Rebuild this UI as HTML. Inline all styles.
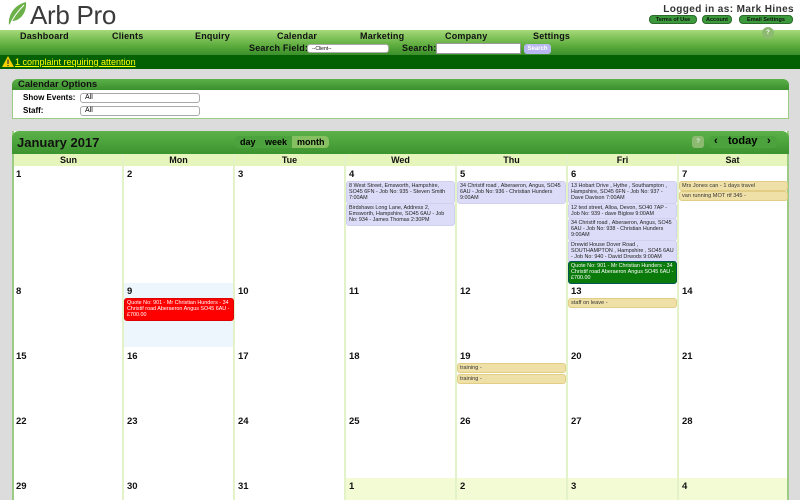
<!DOCTYPE html>
<html><head><style>
*{margin:0;padding:0;box-sizing:border-box}
body{width:800px;height:500px;overflow:hidden;background:#dcdcdc;font-family:"Liberation Sans",Arial,sans-serif;position:relative}
.a{position:absolute}
.top{left:0;top:0;width:800px;height:30px;background:#fff}
.logo{left:30px;top:0px;font-size:26px;color:#3a3a3a;letter-spacing:-0.3px}
.nav{left:0;top:30px;width:800px;height:25px;background:linear-gradient(#a6d97a,#5fae3f 60%,#3a8f2a)}
.nav span{position:absolute;top:1px;font-size:9px;font-weight:bold;color:#111;letter-spacing:0.2px}
.bar{left:0;top:55px;width:800px;height:14px;background:#036103}
.pill{top:15px;height:9px;background:#3c9a3c;border:1px solid #2c6a2c;border-radius:4px;font-size:5.5px;color:#111;font-weight:bold;text-align:center;line-height:8px}
.box{left:12px;top:79px;width:777px;height:40px;background:#fff;border:1px solid #9ccc84;border-top:none;border-radius:6px 6px 0 0}
.boxh{left:12px;top:79px;width:777px;height:11px;background:linear-gradient(#5cb04a,#3a8f2c);border-radius:6px 6px 0 0;font-size:9.5px;font-weight:bold;color:#111;padding-left:6px;line-height:11px}
.sel{height:10px;background:#fff;border:1px solid #aaa;border-radius:3px;font-size:7px;padding-left:4px;line-height:8px}
.cal{left:12px;top:131px;width:777px;height:369px;background:#fff;border-left:2px solid #9ccc84;border-right:2px solid #9ccc84}
.calh{left:12px;top:131px;width:777px;height:23px;background:linear-gradient(#5db24a,#3c942e);border-radius:7px 7px 0 0}
.dh{top:154px;height:12px;background:#e6f5bb;font-size:9px;font-weight:bold;text-align:center;line-height:12px;color:#111}
.vl{top:154px;width:2px;height:346px;background:#e4f2c8}
.n{font-size:9.5px;font-weight:bold;color:#111}
.ev{font-size:5.4px;line-height:6.2px;color:#222;background:#dcdcf8;border-radius:3px;padding:1px 2px;border:1px solid #d0d0ef}
.ye{font-size:5.6px;line-height:7px;color:#333;background:#efe0a8;border:1px solid #e2cd84;border-radius:3px;padding:1px 2px;height:10px}
</style></head><body>
<div class="a top"></div>
<svg class="a" style="left:6px;top:1px" width="22" height="26" viewBox="0 0 22 26"><path d="M3 24 C2 14 8 4 20 1 C21 12 14 20 6 20 Z" fill="#6cb04a"/><path d="M4 24 C7 16 12 10 18 4" stroke="#fff" stroke-width="1" fill="none"/></svg>
<div class="a logo">Arb Pro</div>
<div class="a" style="right:6px;top:4px;font-size:10px;font-weight:bold;color:#333;letter-spacing:.4px">Logged in as: Mark Hines</div>
<div class="a pill" style="left:649px;width:48px">Terms of Use</div>
<div class="a pill" style="left:702px;width:30px">Account</div>
<div class="a pill" style="left:739px;width:54px">Email Settings</div>
<div class="a nav">
<span style="left:20px">Dashboard</span><span style="left:112px">Clients</span><span style="left:195px">Enquiry</span><span style="left:277px">Calendar</span><span style="left:360px">Marketing</span><span style="left:445px">Company</span><span style="left:533px">Settings</span>
<span style="left:249px;top:13px">Search Field:</span><span style="left:402px;top:13px">Search:</span>
</div>
<div class="a" style="left:762px;top:27px;width:12px;height:12px;border-radius:6px;background:#8cba70;color:#fff;font-size:6px;text-align:center;line-height:12px;font-weight:bold">?</div>
<div class="a sel" style="left:307px;top:44px;width:82px;height:9px;font-size:5px">--Client--</div>
<div class="a" style="left:436px;top:43px;width:85px;height:11px;background:#fff;border:1px solid #999"></div>
<div class="a" style="left:524px;top:44px;width:27px;height:10px;background:#b8b8f0;border-radius:3px;font-size:6px;color:#fff;text-align:center;line-height:10px;font-weight:bold">Search</div>
<div class="a bar"></div>
<svg class="a" style="left:2px;top:56px" width="12" height="11"><path d="M6 0 L12 11 L0 11Z" fill="#f5d000"/><rect x="5.4" y="3.5" width="1.2" height="4.5" fill="#333"/><rect x="5.4" y="9" width="1.2" height="1.2" fill="#333"/></svg>
<div class="a" style="left:15px;top:57px;font-size:9px;color:#ff0;text-decoration:underline">1 complaint requiring attention</div>
<div class="a box"></div>
<div class="a boxh">Calendar Options</div>
<div class="a" style="left:23px;top:93px;font-size:8px;font-weight:bold">Show Events:</div>
<div class="a sel" style="left:80px;top:93px;width:120px">All</div>
<div class="a" style="left:23px;top:106px;font-size:8px;font-weight:bold">Staff:</div>
<div class="a sel" style="left:80px;top:106px;width:120px">All</div>
<div class="a cal"></div>
<div class="a calh"></div>
<div class="a" style="left:17px;top:135px;font-size:13px;font-weight:bold;color:#111">January 2017</div>
<div class="a" style="left:235px;top:136px;width:95px;height:12px;background:#4ca23c;border-radius:4px"></div>
<div class="a" style="left:292px;top:136px;width:37px;height:12px;background:#86c060;border-radius:0 4px 4px 0"></div>
<div class="a" style="left:240px;top:137px;font-size:9px;font-weight:bold">day</div>
<div class="a" style="left:265px;top:137px;font-size:9px;font-weight:bold">week</div>
<div class="a" style="left:297px;top:137px;font-size:9px;font-weight:bold">month</div>
<div class="a" style="left:692px;top:136px;width:12px;height:12px;background:#8cba70;border-radius:3px;color:#fff;font-size:6px;text-align:center;line-height:12px">?</div>
<div class="a" style="left:709px;top:136px;width:68px;height:12px;background:#4ca23c;border-radius:4px"></div>
<div class="a" style="left:714px;top:135px;font-size:11px;font-weight:bold">‹</div>
<div class="a" style="left:728px;top:135px;font-size:11px;font-weight:bold">today</div>
<div class="a" style="left:767px;top:135px;font-size:11px;font-weight:bold">›</div>
<div class="a dh" style="left:14px;width:109px">Sun</div><div class="a dh" style="left:123px;width:111px">Mon</div><div class="a dh" style="left:234px;width:111px">Tue</div><div class="a dh" style="left:345px;width:111px">Wed</div><div class="a dh" style="left:456px;width:111px">Thu</div><div class="a dh" style="left:567px;width:111px">Fri</div><div class="a dh" style="left:678px;width:109px">Sat</div>
<div class="a" style="left:124px;top:283px;width:110px;height:64px;background:#eef6fd"></div>
<div class="a" style="left:345px;top:478px;width:442px;height:22px;background:#f3fbd5"></div>
<div class="a vl" style="left:122px"></div><div class="a vl" style="left:233px"></div><div class="a vl" style="left:344px"></div><div class="a vl" style="left:455px"></div><div class="a vl" style="left:566px"></div><div class="a vl" style="left:677px"></div>
<div class="a n" style="left:16px;top:169px">1</div><div class="a n" style="left:127px;top:169px">2</div><div class="a n" style="left:238px;top:169px">3</div><div class="a n" style="left:349px;top:169px">4</div><div class="a n" style="left:460px;top:169px">5</div><div class="a n" style="left:571px;top:169px">6</div><div class="a n" style="left:682px;top:169px">7</div>
<div class="a n" style="left:16px;top:286px">8</div><div class="a n" style="left:127px;top:286px">9</div><div class="a n" style="left:238px;top:286px">10</div><div class="a n" style="left:349px;top:286px">11</div><div class="a n" style="left:460px;top:286px">12</div><div class="a n" style="left:571px;top:286px">13</div><div class="a n" style="left:682px;top:286px">14</div>
<div class="a n" style="left:16px;top:351px">15</div><div class="a n" style="left:127px;top:351px">16</div><div class="a n" style="left:238px;top:351px">17</div><div class="a n" style="left:349px;top:351px">18</div><div class="a n" style="left:460px;top:351px">19</div><div class="a n" style="left:571px;top:351px">20</div><div class="a n" style="left:682px;top:351px">21</div>
<div class="a n" style="left:16px;top:416px">22</div><div class="a n" style="left:127px;top:416px">23</div><div class="a n" style="left:238px;top:416px">24</div><div class="a n" style="left:349px;top:416px">25</div><div class="a n" style="left:460px;top:416px">26</div><div class="a n" style="left:571px;top:416px">27</div><div class="a n" style="left:682px;top:416px">28</div>
<div class="a n" style="left:16px;top:481px">29</div><div class="a n" style="left:127px;top:481px">30</div><div class="a n" style="left:238px;top:481px">31</div><div class="a n" style="left:349px;top:481px">1</div><div class="a n" style="left:460px;top:481px">2</div><div class="a n" style="left:571px;top:481px">3</div><div class="a n" style="left:682px;top:481px">4</div>
<div class="a ev" style="left:346px;top:181px;width:109px">8 West Street, Emsworth, Hampshire, SO45 6FN - Job No: 935 - Steven Smith 7:00AM</div>
<div class="a ev" style="left:346px;top:203px;width:109px">Birdshaws Long Lane, Address 2, Emsworth, Hampshire, SO45 6AU - Job No: 934 - James Thomas 2:30PM</div>
<div class="a ev" style="left:457px;top:181px;width:109px">34 Christif road , Aberaeron, Angus, SO45 6AU - Job No: 936 - Christian Hunders 9:00AM</div>
<div class="a ev" style="left:568px;top:181px;width:109px">13 Hobart Drive , Hythe , Southampton , Hampshire, SO45 6FN - Job No: 937 - Dave Davison 7:00AM</div>
<div class="a ev" style="left:568px;top:203px;width:109px">12 test street, Alloa, Devon, SO40 7AP - Job No: 939 - dave Biglow 9:00AM</div>
<div class="a ev" style="left:568px;top:218px;width:109px">34 Christif road , Aberaeron, Angus, SO45 6AU - Job No: 938 - Christian Hunders 9:00AM</div>
<div class="a ev" style="left:568px;top:240px;width:109px">Drewid House Dover Road , SOUTHAMPTON , Hampshire , SO45 6AU - Job No: 940 - David Drwods 9:00AM</div>
<div class="a ev" style="left:568px;top:261px;width:109px;background:#0a7a0a;border-color:#055;color:#fff">Quote No: 901 - Mr Christian Hunders - 34 Christif road Aberaeron Angus SO45 6AU - £700.00</div>
<div class="a ev" style="left:124px;top:298px;width:110px;background:#f00;border-color:#d00;color:#fff">Quote No: 901 - Mr Christian Hunders - 34 Christif road Aberaeron Angus SO45 6AU - £700.00</div>
<div class="a ye" style="left:679px;top:181px;width:109px">Mrs Jones can - 1 days travel</div>
<div class="a ye" style="left:679px;top:191px;width:109px">van running MOT rtf 345 -</div>
<div class="a ye" style="left:568px;top:298px;width:109px">staff on leave -</div>
<div class="a ye" style="left:457px;top:363px;width:109px">training -</div>
<div class="a ye" style="left:457px;top:374px;width:109px">training -</div>
</body></html>
